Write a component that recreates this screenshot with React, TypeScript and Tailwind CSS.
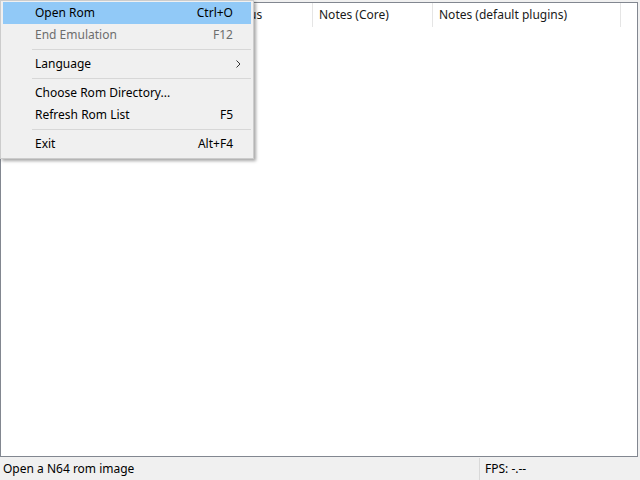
import React from "react";

const font = { fontFamily: '"Noto Sans", "Open Sans", Arial, sans-serif' };

type Item =
  | { kind: "item"; label: string; key?: string; disabled?: boolean; hot?: boolean; sub?: boolean }
  | { kind: "sep" };

const items: Item[] = [
  { kind: "item", label: "Open Rom", key: "Ctrl+O", hot: true },
  { kind: "item", label: "End Emulation", key: "F12", disabled: true },
  { kind: "sep" },
  { kind: "item", label: "Language", sub: true },
  { kind: "sep" },
  { kind: "item", label: "Choose Rom Directory..." },
  { kind: "item", label: "Refresh Rom List", key: "F5" },
  { kind: "sep" },
  { kind: "item", label: "Exit", key: "Alt+F4" },
];

const columns = [
  { title: "Good Name", w: "w-[220px]" },
  { title: "Status", w: "w-[92px]" },
  { title: "Notes (Core)", w: "w-[120px]" },
  { title: "Notes (default plugins)", w: "w-[188px]" },
];

export default function App() {
  return (
    <div
      className="relative flex h-[480px] w-[640px] flex-col bg-[#f0f0f0] text-[12px] text-black"
      style={font}
    >
      {/* rom list */}
      <div className="mt-[2px] ml-0 mr-[2px] flex h-[455px] flex-col border border-[#828790] bg-white">
        <div className="flex h-[24px] items-stretch">
          {columns.map((c) => (
            <div
              key={c.title}
              className={`${c.w} flex items-center border-r border-[#e5e5e5] pl-[6px] text-[#1a1a1a]`}
            >
              {c.title}
            </div>
          ))}
          <div className="flex-1" />
        </div>
      </div>

      {/* status bar */}
      <div className="flex h-[23px] items-center pt-[1px]">
        <div className="flex h-full w-[480px] items-center border-r border-[#d9d9d9] pl-[3px]">
          Open a N64 rom image
        </div>
        <div className="flex h-full flex-1 items-center pl-[5px]">FPS: -.--</div>
      </div>

      {/* file menu */}
      <div className="absolute left-0 top-0 w-[254px] border border-[#cccccc] bg-[#f0f0f0] py-[1px] pl-[2px] pr-[2px] shadow-[2px_2px_3px_rgba(0,0,0,0.35)]">
        {items.map((it, i) =>
          it.kind === "sep" ? (
            <div key={i} className="flex h-[7px] items-center pl-[29px]">
              <div className="h-px w-full bg-[#d7d7d7]" />
            </div>
          ) : (
            <div
              key={i}
              className={`flex h-[22px] items-center pl-[32px] pr-[18px] ${
                it.hot ? "bg-[#91c9f7]" : ""
              } ${it.disabled ? "text-[#6d6d6d]" : "text-black"}`}
            >
              <span className="flex-1">{it.label}</span>
              {it.key && <span>{it.key}</span>}
              {it.sub && (
                <svg width="5" height="8" viewBox="0 0 5 8" className="mr-[-8px]">
                  <path d="M0.5 0.5 L4 4 L0.5 7.5" fill="none" stroke="#333" strokeWidth="1" />
                </svg>
              )}
            </div>
          )
        )}
        <div className="h-[2px]" />
      </div>
    </div>
  );
}
